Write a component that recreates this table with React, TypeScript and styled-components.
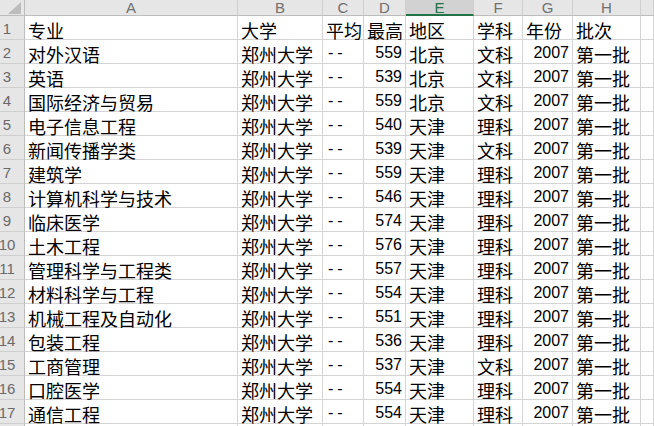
import React from "react";
import styled, { createGlobalStyle, css } from "styled-components";

const GlobalStyle = createGlobalStyle`
  html, body {
    margin: 0;
    padding: 0;
    background: #ffffff;
    overflow: hidden;
  }
  body {
    width: 654px;
    height: 426px;
  }
`;

const Sheet = styled.div`
  display: grid;
  grid-template-columns: 25px 213px 85px 41px 42px 68px 49px 50px 68px 1fr;
  grid-auto-rows: 24px;
  grid-template-rows: 16px;
  width: 654px;
  height: 426px;
  overflow: hidden;
  background: #ffffff;
`;

const CornerCell = styled.div`
  position: relative;
  box-sizing: border-box;
  background: #e6e6e6;
  border-right: 1px solid #bdbdbd;
  border-bottom: 1px solid #bdbdbd;
`;

const CornerTriangle = styled.svg`
  position: absolute;
  left: 8px;
  top: 2px;
  width: 13px;
  height: 12px;
`;

const ColHeader = styled.div<{ $active?: boolean }>`
  box-sizing: border-box;
  display: flex;
  align-items: center;
  justify-content: center;
  background: #e6e6e6;
  border-right: 1px solid #cfcfcf;
  border-bottom: 1px solid #bdbdbd;
  font-family: "Liberation Sans", Arial, sans-serif;
  font-size: 15px;
  line-height: 15px;
  color: #707070;
  ${(p) =>
    p.$active &&
    css`
      background: #d2d2d2;
      color: #217346;
      border-bottom: 2px solid #217346;
    `}
`;

const RowHeader = styled.div`
  box-sizing: border-box;
  display: flex;
  align-items: flex-end;
  justify-content: center;
  padding: 0 10px 2px 0;
  background: #e6e6e6;
  border-right: 1px solid #bdbdbd;
  border-bottom: 1px solid #cfcfcf;
  font-family: "Liberation Sans", Arial, sans-serif;
  font-size: 15px;
  line-height: 17px;
  color: #6a6a6a;
  white-space: nowrap;
`;

const Cell = styled.div<{ $numeric?: boolean; $right?: boolean }>`
  box-sizing: border-box;
  display: flex;
  align-items: flex-end;
  justify-content: ${(p) => (p.$right ? "flex-end" : "flex-start")};
  padding: 0 3px 0 3px;
  border-right: 1px solid #d4d4d4;
  border-bottom: 1px solid #d4d4d4;
  color: #000000;
  white-space: nowrap;
  font-family: "Noto Sans CJK SC", "Liberation Sans", sans-serif;
  font-size: 18px;
  line-height: 18px;
  ${(p) =>
    p.$numeric &&
    css`
      font-family: "Liberation Sans", Arial, sans-serif;
      font-size: 16px;
      line-height: 18px;
      padding-bottom: 1px;
    `}
`;

const Dashes = styled.span`
  letter-spacing: 4px;
  padding-left: 2px;
`;

type Row = [string, string, string, string, string, string, string, string];

const header: Row = ["专业", "大学", "平均", "最高", "地区", "学科", "年份", "批次"];

const data: [string, string, string, string][] = [
  ["对外汉语", "559", "北京", "文科"],
  ["英语", "539", "北京", "文科"],
  ["国际经济与贸易", "559", "北京", "文科"],
  ["电子信息工程", "540", "天津", "理科"],
  ["新闻传播学类", "539", "天津", "文科"],
  ["建筑学", "559", "天津", "理科"],
  ["计算机科学与技术", "546", "天津", "理科"],
  ["临床医学", "574", "天津", "理科"],
  ["土木工程", "576", "天津", "理科"],
  ["管理科学与工程类", "557", "天津", "理科"],
  ["材料科学与工程", "554", "天津", "理科"],
  ["机械工程及自动化", "551", "天津", "理科"],
  ["包装工程", "536", "天津", "理科"],
  ["工商管理", "537", "天津", "文科"],
  ["口腔医学", "554", "天津", "理科"],
  ["通信工程", "554", "天津", "理科"],
];

const columns = ["A", "B", "C", "D", "E", "F", "G", "H", ""];

export default function App() {
  return (
    <>
      <GlobalStyle />
      <Sheet>
        <CornerCell>
          <CornerTriangle viewBox="0 0 13 12">
            <polygon points="13,0 13,12 0,12" fill="#bcbcbc" />
          </CornerTriangle>
        </CornerCell>
        {columns.map((c, i) => (
          <ColHeader key={"h" + i} $active={c === "E"}>
            {c}
          </ColHeader>
        ))}

        <RowHeader>1</RowHeader>
        {header.map((h, i) => (
          <Cell key={"r1" + i}>{h}</Cell>
        ))}
        <Cell />

        {data.map(([major, score, region, subject], idx) => (
          <React.Fragment key={"r" + idx}>
            <RowHeader>{idx + 2}</RowHeader>
            <Cell>{major}</Cell>
            <Cell>郑州大学</Cell>
            <Cell $numeric>
              <Dashes>--</Dashes>
            </Cell>
            <Cell $numeric $right>
              {score}
            </Cell>
            <Cell>{region}</Cell>
            <Cell>{subject}</Cell>
            <Cell $numeric $right>
              2007
            </Cell>
            <Cell>第一批</Cell>
            <Cell />
          </React.Fragment>
        ))}

        <RowHeader />
        {columns.map((_, i) => (
          <Cell key={"r18" + i} />
        ))}
      </Sheet>
    </>
  );
}
